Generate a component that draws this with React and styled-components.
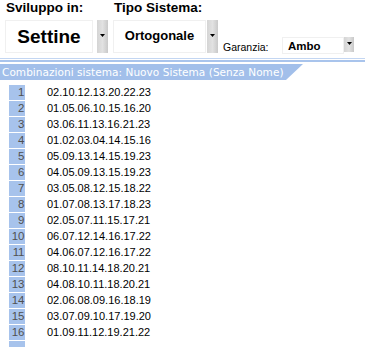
import React from "react";
import styled, { createGlobalStyle } from "styled-components";

const GlobalStyle = createGlobalStyle`
  body {
    margin: 0;
    background: #ffffff;
    font-family: "Liberation Sans", Arial, sans-serif;
  }
`;

const combos = [
  "02.10.12.13.20.22.23",
  "01.05.06.10.15.16.20",
  "03.06.11.13.16.21.23",
  "01.02.03.04.14.15.16",
  "05.09.13.14.15.19.23",
  "04.05.09.13.15.19.23",
  "03.05.08.12.15.18.22",
  "01.07.08.13.17.18.23",
  "02.05.07.11.15.17.21",
  "06.07.12.14.16.17.22",
  "04.06.07.12.16.17.22",
  "08.10.11.14.18.20.21",
  "04.08.10.11.18.20.21",
  "02.06.08.09.16.18.19",
  "03.07.09.10.17.19.20",
  "01.09.11.12.19.21.22",
];

const Caret = () => (
  <svg width="5" height="3" viewBox="0 0 5 3">
    <path d="M0 0h5L2.5 3z" fill="#000" />
  </svg>
);

const Page = styled.div`
  width: 365px;
  height: 347px;
  overflow: hidden;
`;

const Toolbar = styled.div`
  display: flex;
  align-items: flex-start;
  padding: 0 0 0 5px;
  height: 58px;
`;

const Field = styled.div`
  display: flex;
  flex-direction: column;
  margin-right: ${(p) => p.gap || 0}px;
`;

const Label = styled.div`
  font-weight: bold;
  font-size: 13.5px;
  color: #000;
  height: 20px;
  line-height: 16px;
  padding-left: 1px;
`;

const Combo = styled.div`
  display: flex;
  align-items: stretch;
  gap: ${(p) => p.gap}px;
`;

const Box = styled.div`
  width: ${(p) => p.w}px;
  height: ${(p) => p.h}px;
  border: 1px solid #f0f0f0;
  display: flex;
  align-items: center;
  justify-content: ${(p) => (p.left ? "flex-start" : "center")};
  padding-left: ${(p) => (p.left ? 5 : 0)}px;
  font-weight: bold;
  font-size: ${(p) => p.size}px;
  color: #000;
  box-sizing: border-box;
  padding-bottom: ${(p) => p.pb || 0}px;
`;

const Arrow = styled.div`
  width: ${(p) => p.w}px;
  height: ${(p) => p.h}px;
  background: linear-gradient(to right, #d4d4d4, #e2e2e2 50%, #c9c9c9);
  display: flex;
  align-items: center;
  justify-content: center;
  padding-bottom: 2px;
  box-sizing: border-box;
`;

const Warranty = styled.div`
  display: flex;
  align-items: center;
  margin-top: 37px;
  margin-left: 5px;
`;

const SmallLabel = styled.span`
  font-size: 10.5px;
  color: #000;
  width: 59px;
  margin-top: 2px;
`;

const Rules = styled.div`
  border-top: 1px solid #c3d6f2;
  padding-top: 1px;
`;

const Rule = styled.div`
  height: 2px;
  background: #a9c4ec;
`;

const Tab = styled.div`
  margin-top: 2px;
  height: 16px;
  width: 303px;
  background: #a2bfea;
  clip-path: polygon(0 0, 100% 0, calc(100% - 17px) 100%, 0 100%);
  color: #ffffff;
  font-family: "DejaVu Sans", sans-serif;
  font-size: 10.5px;
  letter-spacing: 0.05px;
  line-height: 16px;
  padding-left: 2px;
  box-sizing: border-box;
  white-space: nowrap;
`;

const List = styled.div`
  display: flex;
  flex-direction: column;
  gap: 1px;
  padding: 5px 0 0 9px;
`;

const Row = styled.div`
  display: flex;
  align-items: center;
  height: 15px;
`;

const Index = styled.div`
  width: 16px;
  height: 15px;
  background: #a7c3ec;
  color: #505050;
  font-size: 11.5px;
  text-align: right;
  line-height: 15px;
  padding-right: 1px;
  box-sizing: border-box;
  letter-spacing: -0.3px;
`;

const Numbers = styled.div`
  margin-left: 22px;
  font-size: 11px;
  color: #000;
  line-height: 15px;
`;

export default function App() {
  return (
    <Page>
      <GlobalStyle />
      <Toolbar>
        <Field gap={5}>
          <Label>Sviluppo in:</Label>
          <Combo gap={4}>
            <Box w={88} h={33} size={19}>Settine</Box>
            <Arrow w={11} h={33}>
              <Caret />
            </Arrow>
          </Combo>
        </Field>
        <Field>
          <Label>Tipo Sistema:</Label>
          <Combo gap={1}>
            <Box w={93} h={33} size={13} pb={3}>Ortogonale</Box>
            <Arrow w={11} h={33}>
              <Caret />
            </Arrow>
          </Combo>
        </Field>
        <Warranty>
          <SmallLabel>Garanzia:</SmallLabel>
          <Combo gap={0}>
            <Box w={62} h={17} size={11.5} left>
              Ambo
            </Box>
            <Arrow w={10} h={15}>
              <Caret />
            </Arrow>
          </Combo>
        </Warranty>
      </Toolbar>
      <Rules>
        <Rule />
      </Rules>
      <Tab>Combinazioni sistema: Nuovo Sistema (Senza Nome)</Tab>
      <List>
        {combos.map((c, i) => (
          <Row key={i}>
            <Index>{i + 1}</Index>
            <Numbers>{c}</Numbers>
          </Row>
        ))}
        <Row>
          <Index />
        </Row>
      </List>
    </Page>
  );
}
